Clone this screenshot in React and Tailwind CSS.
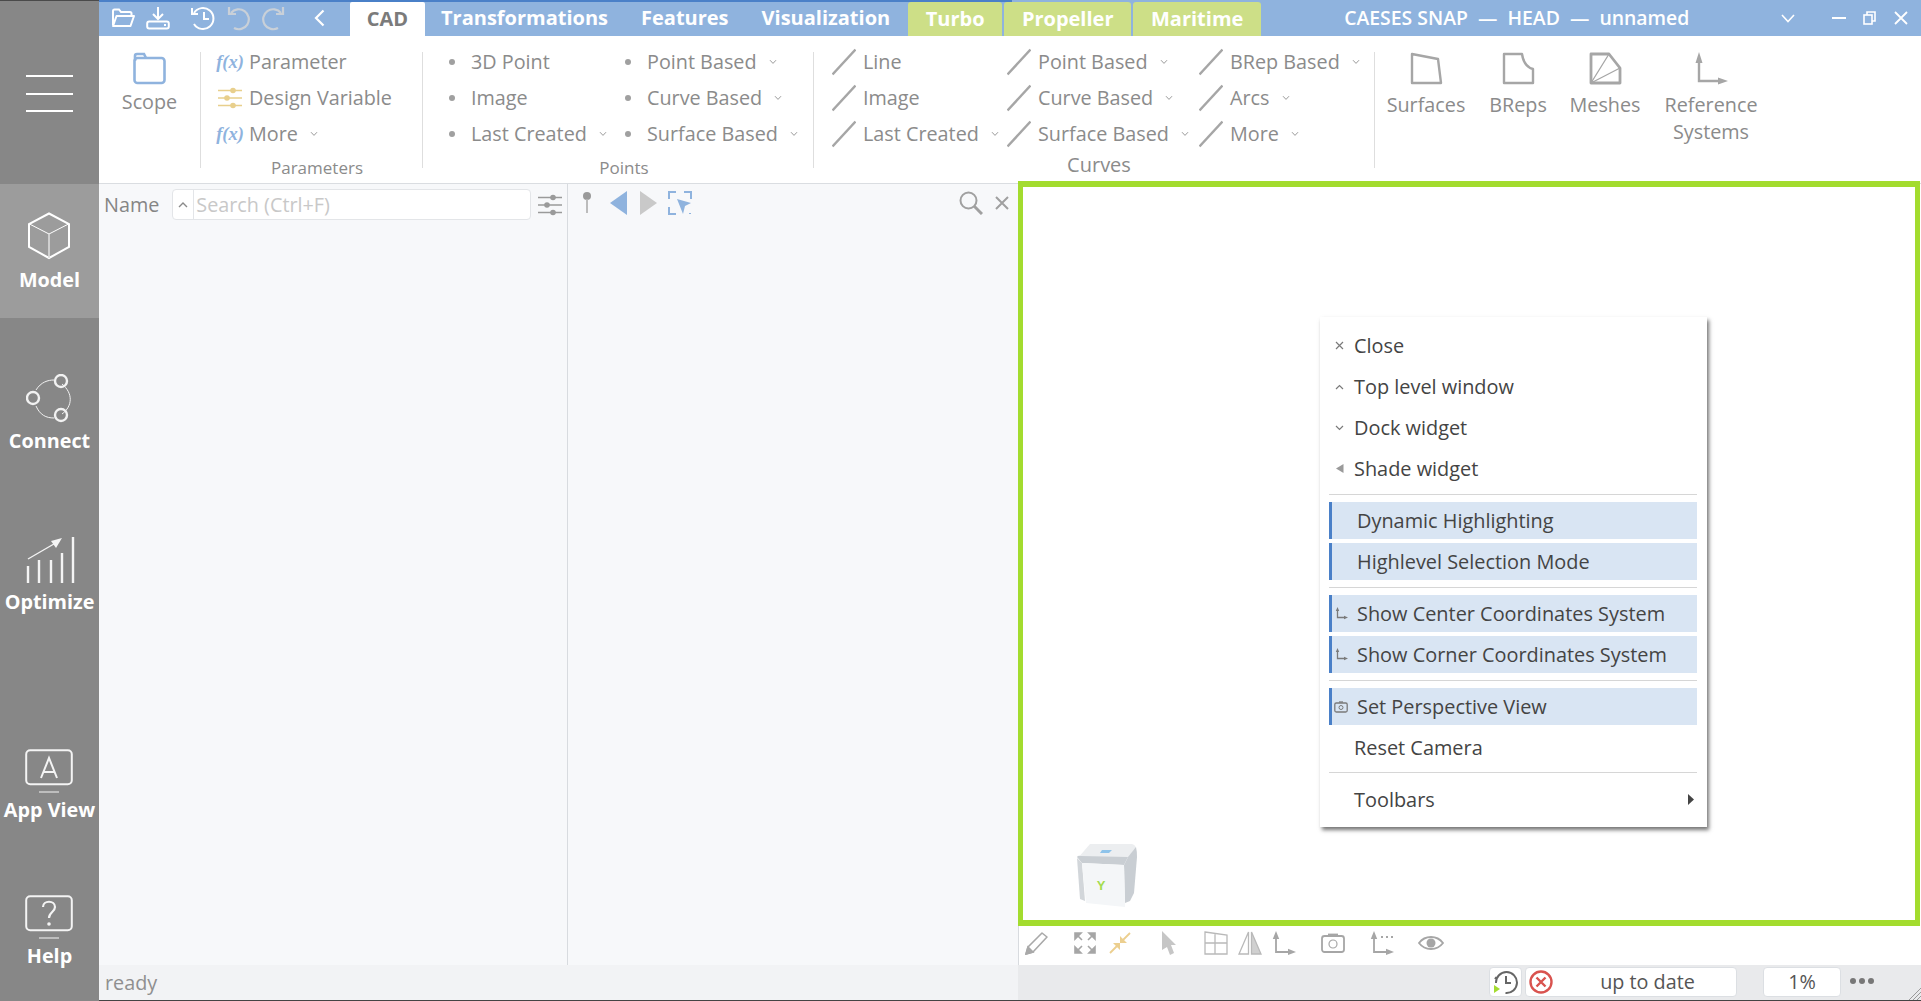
import React from 'react';

const GRAY = '#a6a6a6';
const BLUE = '#8fb3de';
const YELLOW = '#e8cf8c';

// ---- ribbon icons ----
const Fx = () => (
  <span className="font-['Liberation_Serif',serif] italic font-bold text-[18.5px] text-[#8fb3de] leading-none">f(x)</span>
);
const Bullet = () => <span className="block w-[6px] h-[6px] rounded-full bg-[#a0a0a0]" />;
const Slash = () => (
  <svg width="24" height="28" viewBox="0 0 24 28">
    <path d="M0.5 26.5 L23.5 1.5" stroke={GRAY} strokeWidth="2.5" fill="none" />
  </svg>
);
const Sliders = ({ color = YELLOW, w = 24 }) => (
  <svg width={w} height="24" viewBox="0 0 24 24">
    <path d="M0 4.5H24M0 12H24M0 19.5H24" stroke={color} strokeWidth="1.4" />
    <circle cx="15" cy="4.5" r="2.8" fill={color} />
    <circle cx="9" cy="12" r="2.8" fill={color} />
    <circle cx="15" cy="19.5" r="2.8" fill={color} />
  </svg>
);
const Chevron = ({ className = '' }) => (
  <svg width="8" height="6" viewBox="0 0 8 6" className={className}>
    <path d="M1 1.2 L4 4.4 L7 1.2" stroke="#9a9a9a" strokeWidth="1" fill="none" />
  </svg>
);

const RibbonRow = ({ icon, label, more }) => (
  <div className="h-[36px] flex items-center whitespace-nowrap">
    <span className="w-[24px] flex items-center justify-center shrink-0">{icon}</span>
    <span className="ml-[7px] text-[19.8px] text-[#8b8b8b]">{label}</span>
    {more && <Chevron className="ml-[12px]" />}
  </div>
);

const RibbonSep = () => <div className="w-px h-[116px] mt-[16px] bg-[#dedede] shrink-0" />;

const LargeButton = ({ width, icon, children }) => (
  <div className="flex flex-col items-center pt-[16px] shrink-0" style={{ width }}>
    <div className="h-[33px] flex items-center justify-center">{icon}</div>
    <div className="mt-[6px] text-center text-[19.8px] leading-[27px] text-[#8b8b8b]">{children}</div>
  </div>
);

// ---- sidebar ----
const NavItem = ({ icon, label, iconHeight = 58, labelGap = 0 }) => (
  <div className="flex flex-col items-center">
    <div className="flex items-center justify-center" style={{ height: iconHeight, marginBottom: labelGap }}>{icon}</div>
    <div className="text-[19.8px] font-bold text-white leading-[26px] whitespace-nowrap">{label}</div>
  </div>
);

const Sidebar = () => (
  <div className="w-[99px] shrink-0 bg-[#878787] border-t border-[#4a4a4a] flex flex-col">
    <div className="h-[183px] shrink-0 flex justify-center pt-[74px] pr-[1px]">
      <div className="w-[47px] h-[37px] flex flex-col justify-between">
        <div className="h-[2px] bg-white" />
        <div className="h-[2px] bg-white" />
        <div className="h-[2px] bg-white" />
      </div>
    </div>
    <div className="h-[134px] shrink-0 bg-[#9c9c9c] pt-[23px]">
      <NavItem
        iconHeight={58}
        labelGap={2}
        label="Model"
        icon={
          <svg width="44" height="48" viewBox="0 0 44 48" fill="none" stroke="#fff" className="-ml-[1px]">
            <path d="M22 1.5 L42 12 V35 L22 46 L2 35 V12 Z" strokeWidth="2" />
            <path d="M2.5 12 L22 22 L41.5 12" strokeWidth="1" />
            <path d="M22 22 V46" strokeWidth="1.6" stroke="#ddd" />
          </svg>
        }
      />
    </div>
    <div className="mt-[52px]">
      <NavItem
        iconHeight={58}
        label="Connect"
        icon={
          <svg width="48" height="50" viewBox="0 0 48 50" fill="none" stroke="#f2f2f2">
            <path d="M10 16 C15 8 22 6 28 6 M36 10 C47 19 47 32 36 40 M28 44 C20 44 14 41 10 32" strokeWidth="1" />
            <circle cx="35" cy="7" r="6" strokeWidth="2.4" />
            <circle cx="7" cy="24" r="6" strokeWidth="2.4" />
            <circle cx="35" cy="41" r="6" strokeWidth="2.4" />
          </svg>
        }
      />
    </div>
    <div className="mt-[78px]">
      <NavItem
        iconHeight={56}
        labelGap={1}
        label="Optimize"
        icon={
          <svg width="50" height="50" viewBox="0 0 50 50" fill="none" stroke="#f4f4f4" strokeWidth="2.4">
            <path d="M3 31V48M14 25V48M26 25V48M37 18V48M48 2V48" />
            <path d="M3 24 L34 6" strokeWidth="1.4" />
            <path d="M37 3 L26 6 L31 13 Z" fill="#f4f4f4" stroke="none" />
          </svg>
        }
      />
    </div>
    <div className="mt-[134px]">
      <NavItem
        iconHeight={44}
        labelGap={4}
        label="App View"
        icon={
          <svg width="48" height="44" viewBox="0 0 48 44" fill="none" stroke="#f4f4f4" className="-ml-[1px]">
            <rect x="1.2" y="1.2" width="45.6" height="34" rx="4" strokeWidth="2" />
            <path d="M14 43H34" strokeWidth="1.6" stroke="#ccc" />
            <path d="M16 29 L24 9 L32 29 M19 23 H29" strokeWidth="2" />
          </svg>
        }
      />
    </div>
    <div className="mt-[72px]">
      <NavItem
        iconHeight={44}
        labelGap={4}
        label="Help"
        icon={
          <svg width="48" height="44" viewBox="0 0 48 44" fill="none" stroke="#f4f4f4" className="-ml-[1px]">
            <rect x="1.2" y="1.2" width="45.6" height="34" rx="4" strokeWidth="2" />
            <path d="M14 43H34" strokeWidth="1.6" stroke="#ccc" />
            <path d="M18 12 C18 5 30 5 30 12 C30 17 24 17 24 23" strokeWidth="2.2" />
            <circle cx="24" cy="29" r="1.8" fill="#f4f4f4" stroke="none" />
          </svg>
        }
      />
    </div>
  </div>
);

// ---- title bar ----
const TitleBar = () => (
  <div className="relative h-[36px] shrink-0 bg-[#8fb3de] flex items-stretch text-white">
    <div className="absolute left-0 top-0 w-[913px] h-[2px] bg-[#4a80c8]" />
    <div className="w-[251px] shrink-0 flex items-center">
      <svg width="24" height="20" viewBox="0 0 24 20" fill="none" stroke="#fff" strokeWidth="2" className="ml-[12px]">
        <path d="M2 17 V3 a1.5 1.5 0 0 1 1.5 -1.5 H8 L10 4 H19 a1.5 1.5 0 0 1 1.5 1.5 V7" />
        <path d="M2 18 L5.5 8 H23 L19.5 18 Z" strokeLinejoin="round" />
      </svg>
      <svg width="24" height="24" viewBox="0 0 24 24" fill="none" stroke="#fff" strokeWidth="2" className="ml-[11px]">
        <path d="M12 1V12 M7 8 L12 13 L17 8" />
        <rect x="1.2" y="15.5" width="21.6" height="7" rx="2" />
        <path d="M18 19H20" />
      </svg>
      <svg width="25" height="25" viewBox="0 0 25 25" fill="none" stroke="#fff" strokeWidth="2" className="ml-[21px]">
        <path d="M3 7 A10.5 10.5 0 1 1 3 18" />
        <path d="M1 2 V8 H7" />
        <path d="M13 6V13H18" />
      </svg>
      <svg width="25" height="25" viewBox="0 0 25 25" fill="none" stroke="#c9d0d8" strokeWidth="2.2" className="ml-[10px]">
        <path d="M5 7 A10 10 0 1 1 8 22" />
        <path d="M3 1 V8 H10" />
      </svg>
      <svg width="25" height="25" viewBox="0 0 25 25" fill="none" stroke="#c9d0d8" strokeWidth="2.2" className="ml-[10px]">
        <path d="M20 7 A10 10 0 1 0 17 22" />
        <path d="M22 1 V8 H15" />
      </svg>
      <svg width="11" height="18" viewBox="0 0 11 18" fill="none" stroke="#fff" strokeWidth="2.2" className="ml-[28px]">
        <path d="M9.5 1.5 L2 9 L9.5 16.5" />
      </svg>
    </div>
    <div className="w-[75px] mt-[2px] shrink-0 bg-white rounded-t-[2px] flex items-center justify-center text-[20px] font-bold text-[#7b7b7b]">CAD</div>
    <div className="pl-[16px] pr-[17px] flex items-center text-[20px] font-bold">Transformations</div>
    <div className="px-[16px] flex items-center text-[20px] font-bold">Features</div>
    <div className="pl-[17px] pr-[16px] flex items-center text-[20px] font-bold">Visualization</div>
    <div className="ml-[2px] w-[94px] mt-[2px] shrink-0 bg-[#cddf87] rounded-t-[3px] flex items-center justify-center text-[20px] font-bold">Turbo</div>
    <div className="ml-[2px] w-[127px] mt-[2px] shrink-0 bg-[#cddf87] rounded-t-[3px] flex items-center justify-center text-[20px] font-bold">Propeller</div>
    <div className="ml-[2px] w-[128px] mt-[2px] shrink-0 bg-[#cddf87] rounded-t-[3px] flex items-center justify-center text-[20px] font-bold">Maritime</div>
    <div className="ml-[83px] flex items-center text-[19.4px] font-semibold whitespace-pre">CAESES SNAP  —  HEAD  —  unnamed</div>
    <div className="ml-auto flex items-center pr-[13px]">
      <svg width="14" height="9" viewBox="0 0 14 9" fill="none" stroke="#fff" strokeWidth="1.6"><path d="M1 1 L7 7.5 L13 1" /></svg>
      <svg width="14" height="2" viewBox="0 0 14 2" className="ml-[37px]"><path d="M0 1H14" stroke="#fff" strokeWidth="2" /></svg>
      <svg width="13" height="14" viewBox="0 0 13 14" fill="none" stroke="#fff" strokeWidth="1.6" className="ml-[17px]">
        <rect x="1" y="4" width="8" height="9" />
        <path d="M4 4 V1 H12 V10 H9" />
      </svg>
      <svg width="14" height="14" viewBox="0 0 14 14" stroke="#fff" strokeWidth="1.8" className="ml-[18px]"><path d="M1 1 L13 13 M13 1 L1 13" /></svg>
    </div>
  </div>
);

// ---- ribbon ----
const Ribbon = () => (
  <div className="h-[148px] shrink-0 bg-white border-b border-[#dadde1] flex">
    <LargeButton
      width={101}
      icon={
        <svg width="33" height="33" viewBox="0 0 33 33" fill="none" stroke={BLUE} strokeWidth="2.6">
          <path d="M2 9 V4 a2 2 0 0 1 2 -2 H11 L13 6" />
          <rect x="1.5" y="6" width="30" height="25" rx="3" />
        </svg>
      }
    >
      <div className="mt-[-3px]">Scope</div>
    </LargeButton>
    <RibbonSep />
    <div className="w-[221px] shrink-0 pl-[17px] pt-[8px] relative">
      <RibbonRow icon={<Fx />} label="Parameter" />
      <RibbonRow icon={<Sliders />} label="Design Variable" />
      <RibbonRow icon={<Fx />} label="More" more />
      <div className="pl-[11px] -ml-[17px] text-center text-[17px] leading-[24px] mt-[4px] text-[#8b8b8b]">Parameters</div>
    </div>
    <RibbonSep />
    <div className="w-[390px] shrink-0 pt-[8px]">
      <div className="flex pl-[17px]">
        <div className="w-[176px] shrink-0">
          <RibbonRow icon={<Bullet />} label="3D Point" />
          <RibbonRow icon={<Bullet />} label="Image" />
          <RibbonRow icon={<Bullet />} label="Last Created" more />
        </div>
        <div>
          <RibbonRow icon={<Bullet />} label="Point Based" more />
          <RibbonRow icon={<Bullet />} label="Curve Based" more />
          <RibbonRow icon={<Bullet />} label="Surface Based" more />
        </div>
      </div>
      <div className="pl-[12px] text-center text-[17px] leading-[24px] mt-[4px] text-[#8b8b8b]">Points</div>
    </div>
    <RibbonSep />
    <div className="w-[560px] shrink-0 pt-[8px]">
      <div className="flex pl-[18px]">
        <div className="w-[175px] shrink-0">
          <RibbonRow icon={<Slash />} label="Line" />
          <RibbonRow icon={<Slash />} label="Image" />
          <RibbonRow icon={<Slash />} label="Last Created" more />
        </div>
        <div className="w-[192px] shrink-0">
          <RibbonRow icon={<Slash />} label="Point Based" more />
          <RibbonRow icon={<Slash />} label="Curve Based" more />
          <RibbonRow icon={<Slash />} label="Surface Based" more />
        </div>
        <div>
          <RibbonRow icon={<Slash />} label="BRep Based" more />
          <RibbonRow icon={<Slash />} label="Arcs" more />
          <RibbonRow icon={<Slash />} label="More" more />
        </div>
      </div>
      <div className="pl-[10px] text-center text-[20px] leading-[26px] text-[#8b8b8b]">Curves</div>
    </div>
    <RibbonSep />
    <LargeButton
      width={102}
      icon={
        <svg width="33" height="33" viewBox="0 0 33 33" fill="none" stroke={GRAY} strokeWidth="2.4">
          <path d="M2 2 L28 7 L31 31 H2 Z" strokeLinejoin="round" />
        </svg>
      }
    >
      Surfaces
    </LargeButton>
    <LargeButton
      width={82}
      icon={
        <svg width="33" height="33" viewBox="0 0 33 33" fill="none" stroke={GRAY} strokeWidth="2.4">
          <path d="M2 2 H20 C21 9 24 15 31 17 V31 H2 Z" strokeLinejoin="round" />
        </svg>
      }
    >
      BReps
    </LargeButton>
    <LargeButton
      width={92}
      icon={
        <svg width="33" height="33" viewBox="0 0 33 33" fill="none" stroke={GRAY}>
          <path d="M2 2 H20 L31 16 V31 H2 Z" strokeWidth="2.8" strokeLinejoin="round" />
          <path d="M2 31 L20 2 M2 31 L31 16" strokeWidth="1.3" />
        </svg>
      }
    >
      Meshes
    </LargeButton>
    <LargeButton
      width={120}
      icon={
        <svg width="33" height="33" viewBox="0 0 33 33" fill="none" stroke={GRAY} strokeWidth="2.4">
          <path d="M4 8 V29 H25" />
          <path d="M4 0 L0.5 11 H7.5 Z M33 29 L23 25.5 V32.5 Z" fill={GRAY} stroke="none" />
        </svg>
      }
    >
      Reference
      <br />
      Systems
    </LargeButton>
  </div>
);

// ---- viewport context menu ----
const MenuIcon = ({ children }) => (
  <span className="absolute left-[4px] top-0 bottom-0 w-[13px] flex items-center justify-center">{children}</span>
);
const AxesSmall = () => (
  <svg width="13" height="13" viewBox="0 0 13 13" fill="none" stroke="#7a7a7a" strokeWidth="1.3">
    <path d="M2.5 3V10.5H10" />
    <path d="M2.5 0 L0.8 4 H4.2 Z M13 10.5 L9 8.8 V12.2 Z" fill="#7a7a7a" stroke="none" />
  </svg>
);
const PlainItem = ({ label, icon, height = 41 }) => (
  <div className="relative flex items-center pl-[25px]" style={{ height }}>
    {icon && <MenuIcon>{icon}</MenuIcon>}
    <span>{label}</span>
  </div>
);
const CheckedItem = ({ label, icon }) => (
  <div className="relative h-[37px] bg-[#d9e5f3] border-l-[3px] border-[#4a80c8] flex items-center pl-[25px]">
    {icon && <span className="absolute left-[1px] w-[16px] flex justify-center">{icon}</span>}
    <span>{label}</span>
  </div>
);
const MenuSep = () => <div className="h-px bg-[#d6d6d6]" />;

const ContextMenu = () => (
  <div className="absolute left-[297px] top-[130px] w-[387px] h-[510px] bg-white shadow-[2px_3px_4px_rgba(0,0,0,0.55)] pl-[9px] pr-[10px] pt-[8px] text-[19.9px] text-[#444444] whitespace-nowrap">
    <PlainItem
      label="Close"
      icon={<svg width="9" height="9" viewBox="0 0 9 9" stroke="#7a7a7a" strokeWidth="1.2"><path d="M1 1 L8 8 M8 1 L1 8" /></svg>}
    />
    <PlainItem
      label="Top level window"
      icon={<svg width="9" height="6" viewBox="0 0 9 6" fill="none" stroke="#7a7a7a" strokeWidth="1.2"><path d="M1 5 L4.5 1.5 L8 5" /></svg>}
    />
    <PlainItem
      label="Dock widget"
      icon={<svg width="9" height="6" viewBox="0 0 9 6" fill="none" stroke="#7a7a7a" strokeWidth="1.2"><path d="M1 1 L4.5 4.5 L8 1" /></svg>}
    />
    <PlainItem
      label="Shade widget"
      icon={<svg width="8" height="9" viewBox="0 0 8 9" fill="#9a9a9a"><path d="M7.5 0 V9 L0 4.5 Z" /></svg>}
    />
    <div className="h-[5px]" />
    <MenuSep />
    <div className="h-[7px]" />
    <CheckedItem label="Dynamic Highlighting" />
    <div className="h-[4px]" />
    <CheckedItem label="Highlevel Selection Mode" />
    <div className="h-[7px]" />
    <MenuSep />
    <div className="h-[7px]" />
    <CheckedItem label="Show Center Coordinates System" icon={<AxesSmall />} />
    <div className="h-[4px]" />
    <CheckedItem label="Show Corner Coordinates System" icon={<AxesSmall />} />
    <div className="h-[7px]" />
    <MenuSep />
    <div className="h-[7px]" />
    <CheckedItem
      label="Set Perspective View"
      icon={
        <svg width="14" height="12" viewBox="0 0 14 12" fill="none" stroke="#7a7a7a" strokeWidth="1.3">
          <rect x="0.8" y="2" width="12.4" height="9" rx="1.5" />
          <circle cx="7" cy="6.5" r="2" strokeWidth="1" />
          <path d="M5 1H9" />
        </svg>
      }
    />
    <PlainItem label="Reset Camera" height={45} />
    <div className="h-[2px]" />
    <MenuSep />
    <div className="relative h-[53px] flex items-center pl-[25px]">
      <span>Toolbars</span>
      <svg width="6" height="11" viewBox="0 0 6 11" fill="#444" className="absolute right-[3px]"><path d="M0 0 L6 5.5 L0 11 Z" /></svg>
    </div>
  </div>
);

const ViewCube = () => (
  <svg width="62" height="66" viewBox="0 0 62 66" className="absolute left-[53px] top-[656px]">
    {/* top face and its bevels */}
    <path d="M14 1 H56 Q60 2 60 6 L53 15 H2 Z" fill="#eceef0" />
    <path d="M1 14 Q2 12 5 13 L52 14 L48 22 L6 20 Z" fill="#c9ced3" />
    <path d="M52 14 L60 4 Q61 8 61 14 L58 50 L54 58 L49 60 L48 22 Z" fill="#c9ced3" />
    <path d="M1 15 L6 20 L9 58 L4 56 Z" fill="#d2d6da" />
    {/* front face */}
    <path d="M6 20 L48 22 L49 64 L10 60 Z" fill="#f4f6f8" />
    <path d="M26 7 H36 L33 10 H24 Z" fill="#8ec3ea" />
    <text x="25" y="47" textAnchor="middle" fontFamily="Liberation Sans, sans-serif" fontWeight="700" fontSize="13" fill="#a4dc50">Y</text>
  </svg>
);

// ---- viewport toolbar ----
const ToolIcon = ({ ml, children }) => <span className="flex items-center" style={{ marginLeft: ml }}>{children}</span>;

const ViewToolbar = () => (
  <div className="h-[39px] shrink-0 bg-white border-l border-[#d8dbdf] flex items-center pb-[5px]">
    <ToolIcon ml={6}>
      <svg width="24" height="24" viewBox="0 0 24 24" fill="none" stroke="#a9a9a9" strokeWidth="1.6">
        <path d="M1 23 L3 16 L17 2 L22 6 L8 21 Z" strokeLinejoin="round" />
        <path d="M1 23 L3 16 L8 21 Z" fill="#a9a9a9" />
      </svg>
    </ToolIcon>
    <ToolIcon ml={25}>
      <svg width="22" height="22" viewBox="0 0 22 22" fill={GRAY} stroke={GRAY} strokeWidth="1.6">
        <path d="M1 1 H7 L1 7 Z M21 1 H15 L21 7 Z M1 21 H7 L1 15 Z M21 21 H15 L21 15 Z" />
        <path d="M3 3 L8 8 M19 3 L14 8 M3 19 L8 14 M19 19 L14 14" />
      </svg>
    </ToolIcon>
    <ToolIcon ml={13}>
      <svg width="22" height="22" viewBox="0 0 22 22" fill="#eccf8f" stroke="#eccf8f" strokeWidth="1.8">
        <path d="M21 1 L13 9 M1 21 L9 13" />
        <path d="M11 11 H18 L11 4 Z M11 11 H4 L11 18 Z" stroke="none" />
      </svg>
    </ToolIcon>
    <ToolIcon ml={30}>
      <svg width="16" height="24" viewBox="0 0 16 24" fill="#c6c6c6"><path d="M1 0 L15 14 H10 L13 22 L9 24 L6 16 L1 19 Z" /></svg>
    </ToolIcon>
    <ToolIcon ml={27}>
      <svg width="24" height="24" viewBox="0 0 24 24" fill="none" stroke="#b9b9b9" strokeWidth="1.3">
        <path d="M1 1 L23 4 V23 H1 Z M11 2 V23 M1 12 H23" />
      </svg>
    </ToolIcon>
    <ToolIcon ml={10}>
      <svg width="24" height="24" viewBox="0 0 24 24" stroke="#b9b9b9" strokeWidth="1.3">
        <path d="M10.5 1 L1 23 H10.5 Z" fill="none" />
        <path d="M13.5 1 L23 23 H13.5 Z" fill="#d0d0d0" />
      </svg>
    </ToolIcon>
    <ToolIcon ml={10}>
      <svg width="24" height="24" viewBox="0 0 24 24" fill="none" stroke={GRAY} strokeWidth="1.8">
        <path d="M4 6 V21 H18" />
        <path d="M4 0 L0.8 8 H7.2 Z M24 21 L16 17.8 V24 Z" fill={GRAY} stroke="none" />
      </svg>
    </ToolIcon>
    <ToolIcon ml={25}>
      <svg width="24" height="20" viewBox="0 0 24 20" fill="none" stroke={GRAY} strokeWidth="1.8">
        <rect x="1" y="3" width="22" height="16" rx="2.5" />
        <circle cx="12" cy="11" r="4" strokeWidth="1.2" />
        <path d="M7 1.5 H17" />
      </svg>
    </ToolIcon>
    <ToolIcon ml={25}>
      <svg width="24" height="24" viewBox="0 0 24 24" fill="none" stroke={GRAY} strokeWidth="1.8">
        <path d="M4 6 V21 H18" />
        <path d="M4 0 L0.8 8 H7.2 Z M24 21 L16 17.8 V24 Z" fill={GRAY} stroke="none" />
        <path d="M11 6H13M16 6H18M21 6H23" strokeWidth="2.2" />
      </svg>
    </ToolIcon>
    <ToolIcon ml={24}>
      <svg width="26" height="16" viewBox="0 0 26 16" fill="none" stroke={GRAY}>
        <path d="M1 8 C7 0 19 0 25 8 C19 16 7 16 1 8 Z" strokeWidth="1.8" />
        <circle cx="13" cy="8" r="4.5" fill={GRAY} stroke="none" />
      </svg>
    </ToolIcon>
  </div>
);

// ---- status bar ----
const StatusBar = () => (
  <div className="h-[36px] shrink-0 flex border-b border-[#444]">
    <div className="w-[919px] shrink-0 bg-[#f2f3f5] pl-[6px] text-[19.8px] leading-[35px] text-[#8f8f8f]">ready</div>
    <div className="flex-1 bg-[#e9eaec] relative flex items-start pt-[2px] pl-[471px]">
      <div className="w-[33px] h-[30px] bg-white border border-[#dcdfe3] rounded-[4px] flex items-center justify-center">
        <svg width="25" height="25" viewBox="0 0 25 25" fill="none" stroke="#666" strokeWidth="2">
          <path d="M3 13 A10.5 10.5 0 1 1 12.5 23 M3.5 7 L2 9" />
          <path d="M13 6V13H18" />
          <path d="M1 15 L7 19 L1 23 Z" fill="#a4dc30" stroke="none" />
        </svg>
      </div>
      <div className="ml-[3px] w-[212px] h-[30px] bg-white border border-[#dcdfe3] rounded-[4px] relative flex items-center justify-center pl-[33px] text-[19.8px] text-[#555]">
        <svg width="24" height="24" viewBox="0 0 24 24" fill="none" stroke="#d9534f" strokeWidth="2.4" className="absolute left-[3px]">
          <circle cx="12" cy="12" r="10.5" />
          <path d="M7.5 7.5 L16.5 16.5 M16.5 7.5 L7.5 16.5" />
        </svg>
        up to date
      </div>
      <div className="ml-[26px] w-[78px] h-[30px] bg-white border border-[#dcdfe3] rounded-[4px] flex items-center justify-center text-[19.8px] text-[#555]">1%</div>
      <div className="ml-[9px] h-[28px] flex items-center gap-[3px]">
        <span className="w-[6px] h-[6px] rounded-full bg-[#777]" />
        <span className="w-[6px] h-[6px] rounded-full bg-[#777]" />
        <span className="w-[6px] h-[6px] rounded-full bg-[#777]" />
      </div>
      <svg width="13" height="13" viewBox="0 0 13 13" stroke="#9a9a9a" className="absolute right-0 bottom-0">
        <path d="M13 1 L1 13 M13 5 L5 13 M13 9 L9 13" />
      </svg>
    </div>
  </div>
);

const App = () => (
  <div className="w-[1921px] h-[1001px] flex overflow-hidden bg-white font-['Open_Sans',sans-serif]">
    <Sidebar />
    <div className="flex-1 min-w-0 flex flex-col">
      <TitleBar />
      <Ribbon />
      <div className="flex-1 min-h-0 flex">
        {/* object tree */}
        <div className="w-[469px] shrink-0 bg-[#f7f8fa] border-r border-[#d8dbdf] flex items-start pt-[5px]">
          <span className="ml-[5px] text-[19.8px] leading-[32px] text-[#858585]">Name</span>
          <div className="ml-[13px] w-[359px] h-[31px] bg-white border border-[#e3e5e8] rounded-[4px] flex items-center">
            <span className="w-[21px] h-full border-r border-[#e3e5e8] flex items-center justify-center">
              <svg width="10" height="7" viewBox="0 0 10 7" fill="none" stroke="#8a8a8a" strokeWidth="1.4"><path d="M1 6 L5 2 L9 6" /></svg>
            </span>
            <span className="ml-[2px] text-[19.8px] text-[#c8c8c8]">Search (Ctrl+F)</span>
          </div>
          <span className="ml-[7px] mt-[4px]"><Sliders color="#9a9a9a" /></span>
        </div>
        {/* detail panel */}
        <div className="w-[450px] shrink-0 bg-[#f7f8fa] flex items-start pt-[7px]">
          <svg width="10" height="22" viewBox="0 0 10 22" className="ml-[14px]">
            <circle cx="5" cy="5" r="4" fill="#9a9a9a" />
            <path d="M5 8V22" stroke="#b5b5b5" strokeWidth="1.8" />
          </svg>
          <svg width="17" height="24" viewBox="0 0 17 24" className="ml-[18px]"><path d="M17 0 V24 L0 12 Z" fill={BLUE} /></svg>
          <svg width="17" height="24" viewBox="0 0 17 24" className="ml-[13px]"><path d="M0 0 V24 L17 12 Z" fill="#c9c9c9" /></svg>
          <svg width="24" height="24" viewBox="0 0 24 24" fill="none" stroke={BLUE} strokeWidth="2" className="ml-[11px]">
            <path d="M1 8 V1 H8 M16 1 H23 V8 M1 16 V23 H8 M22 23 V22" />
            <path d="M9 8 L23 12 L17 15 L15 23 Z" fill={BLUE} stroke="none" />
          </svg>
          <svg width="24" height="24" viewBox="0 0 24 24" fill="none" stroke="#a0a0a0" strokeWidth="2" className="ml-auto">
            <circle cx="9.5" cy="9.5" r="8" />
            <path d="M15 15 L23 23" strokeWidth="3" />
          </svg>
          <svg width="14" height="14" viewBox="0 0 14 14" stroke="#a0a0a0" strokeWidth="2" className="ml-[12px] mr-[9px] mt-[5px]"><path d="M1 1 L13 13 M13 1 L1 13" /></svg>
        </div>
        {/* 3d viewport */}
        <div className="flex-1 min-w-0 flex flex-col -mt-[3px]">
          <div className="relative flex-1 bg-white border-x-[5px] border-y-[6px] border-[#a3dc2e] mr-[1px]">
            <ContextMenu />
            <ViewCube />
          </div>
          <ViewToolbar />
        </div>
      </div>
      <StatusBar />
    </div>
  </div>
);

export default App;
